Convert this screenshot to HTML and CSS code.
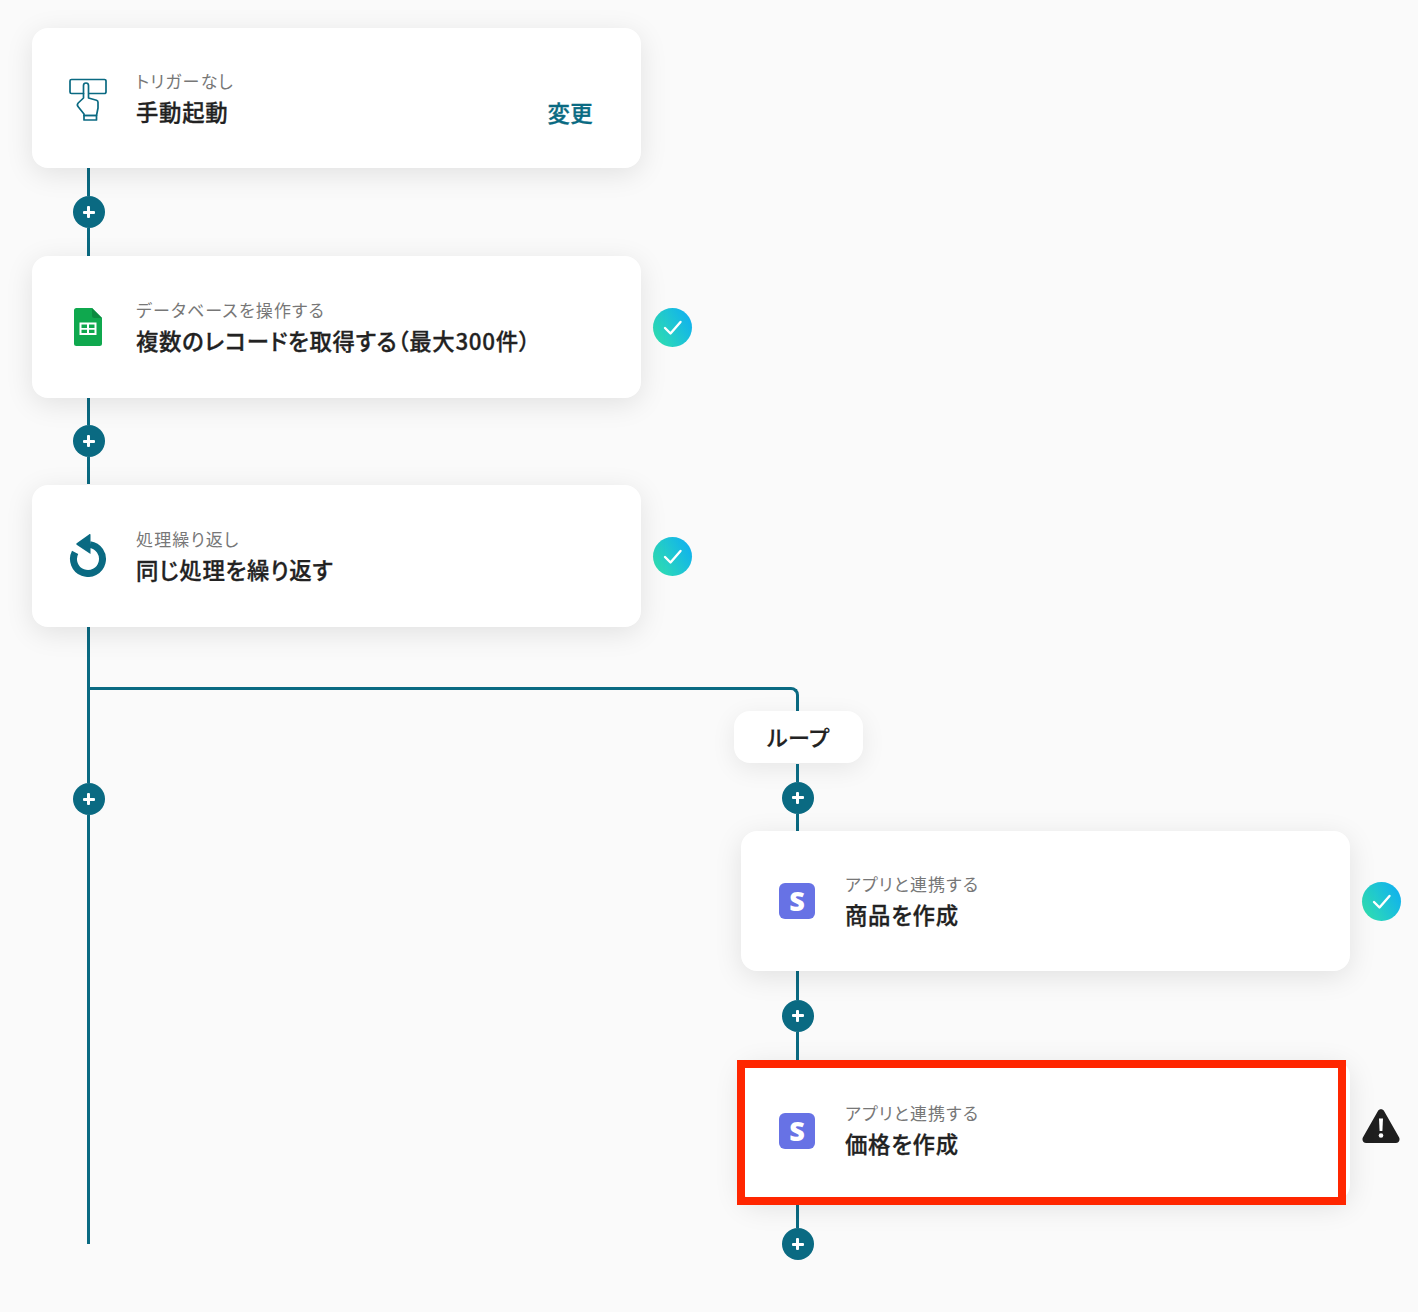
FILE: index.html
```html
<!DOCTYPE html>
<html lang="ja">
<head>
<meta charset="utf-8">
<title>フロー</title>
<link rel="stylesheet" href="styles.css">
</head>
<body>
<main class="flow">
  <div class="row">
    <section class="card card-short">
      <span class="icon">
        <svg class="svg-hand" viewBox="69 78 38 44" fill="none" stroke="#0a6a82" stroke-width="1.7" stroke-linejoin="round" stroke-linecap="round">
          <path d="M83.500 93.500H71.500a1.500 1.500 0 0 1-1.500-1.500V81a1.500 1.500 0 0 1 1.500-1.500h33a1.500 1.500 0 0 1 1.500 1.500v11a1.500 1.500 0 0 1-1.500 1.500H89"/>
          <path d="M84 115.500V114L78 106.500c-1-1.300-.8-2.400.2-3.500L83.500 98V85.500a2.500 2.500 0 0 1 5 0V98l8 2.200c1 .3 1.500 1 1.500 2V108l-1.500 7.500z"/>
          <path d="M84 115.500h12.500v4.500H84z"/>
        </svg>
      </span>
      <div class="text">
        <p class="label">トリガーなし</p>
        <p class="title">手動起動</p>
      </div>
      <a class="change">変更</a>
    </section>
  </div>
  <div class="conn conn-88"><i class="line"></i><span class="plus"></span><i class="line"></i></div>
  <div class="row">
    <section class="card">
      <span class="icon">
        <svg class="svg-sheet" viewBox="74 308 28 38">
          <path fill="#0fa84e" d="M76.500 308H92l10 10v25.500a2.500 2.500 0 0 1-2.500 2.500h-23a2.500 2.500 0 0 1-2.500-2.500v-33a2.500 2.500 0 0 1 2.500-2.500z"/>
          <path fill="#0b8a40" d="M92 308l10 10h-7.500a2.500 2.500 0 0 1-2.500-2.500z"/>
          <path fill="#fff" fill-rule="evenodd" d="M79.500 322.500h17V335h-17zm2 2V328H87v-3.500zm7.500 0V328h5.500v-3.500zm-7.500 5.200v3.300H87v-3.300zm7.500 0v3.300h5.500v-3.300z"/>
        </svg>
      </span>
      <div class="text">
        <p class="label">データベースを操作する</p>
        <p class="title">複数のレコードを取得する（最大300件）</p>
      </div>
    </section>
    <span class="check"><svg viewBox="0 0 39 39" fill="none" stroke="#fff" stroke-width="2.400" stroke-linecap="round" stroke-linejoin="round"><path d="M12 20l5.500 5.500L27.500 14"/></svg></span>
  </div>
  <div class="conn conn-87"><i class="line"></i><span class="plus"></span><i class="line"></i></div>
  <div class="row">
    <section class="card">
      <span class="icon">
        <svg class="svg-loop" viewBox="69 533 38 44" fill="none">
          <path stroke="#0a6a82" stroke-width="7" d="M90 544.600A14.500 14.500 0 1 1 75.100 552.300"/>
          <path fill="#0a6a82" d="M90.500 534v20L77 545c-1-.6-1-1.400 0-2L89 534.500c.7-.4 1.500-.2 1.500-.5z"/>
        </svg>
      </span>
      <div class="text">
        <p class="label">処理繰り返し</p>
        <p class="title">同じ処理を繰り返す</p>
      </div>
    </section>
    <span class="check"><svg viewBox="0 0 39 39" fill="none" stroke="#fff" stroke-width="2.400" stroke-linecap="round" stroke-linejoin="round"><path d="M12 20l5.500 5.500L27.500 14"/></svg></span>
  </div>
  <div class="branch">
    <div class="rail"><i class="line"></i><span class="plus"></span><i class="line"></i></div>
    <div class="loop">
      <div class="elbow"></div>
      <div class="loop-body">
        <div class="pill">ループ</div>
        <div class="conn conn-loop"><i class="line"></i><span class="plus"></span><i class="line"></i></div>
        <div class="row">
          <section class="card card-short">
            <span class="icon"><span class="stripe">S</span></span>
            <div class="text">
              <p class="label">アプリと連携する</p>
              <p class="title">商品を作成</p>
            </div>
          </section>
          <span class="check"><svg viewBox="0 0 39 39" fill="none" stroke="#fff" stroke-width="2.400" stroke-linecap="round" stroke-linejoin="round"><path d="M12 20l5.500 5.500L27.500 14"/></svg></span>
        </div>
        <div class="conn conn-89"><i class="line"></i><span class="plus"></span><i class="line"></i></div>
        <div class="row">
          <section class="card card-last">
            <span class="icon"><span class="stripe">S</span></span>
            <div class="text">
              <p class="label">アプリと連携する</p>
              <p class="title">価格を作成</p>
            </div>
            <div class="highlight"></div>
          </section>
          <svg class="warn" viewBox="0 0 38 34">
            <path fill="#1f1f1f" d="M15.800 2.200c1.500-2.600 4.900-2.600 6.400 0l14.800 26c1.500 2.600-.3 5.800-3.200 5.800H4.200c-2.900 0-4.700-3.200-3.200-5.800z"/>
            <path fill="#fff" d="M17 9.500h4l-.6 12.500h-2.800z"/>
            <circle fill="#fff" cx="19" cy="26.500" r="2.300"/>
          </svg>
        </div>
        <div class="conn conn-end"><i class="line"></i><span class="plus"></span></div>
      </div>
    </div>
  </div>
</main>
</body>
</html>
```
FILE: styles.css
```css
* { box-sizing: border-box; }
html, body { margin: 0; }
body {
  background: #fafafa;
  color: #222;
  font-family: "Noto Sans CJK JP", "Noto Sans", sans-serif;
  font-feature-settings: "palt";
  height: 1312px;
  overflow: hidden;
}
p { margin: 0; }
.flow { padding: 28px 0 0 32px; }
.row { display: flex; align-items: center; gap: 12px; }
.card {
  position: relative;
  display: flex;
  align-items: center;
  width: 609px;
  height: 142px;
  padding: 0 48px 0 37px;
  background: #fff;
  border-radius: 16px;
  box-shadow: 0 6px 28px rgba(0, 0, 0, .1);
}
.card-short { height: 140px; }
.card-last { height: 141px; }
.icon {
  flex: none;
  display: flex;
  justify-content: center;
  align-items: center;
  width: 38px;
  height: 44px;
  margin-right: 29px;
}
.svg-hand { width: 38px; height: 44px; display: block; margin-top: 4px; }
.svg-sheet { width: 28px; height: 38px; display: block; }
.svg-loop { width: 38px; height: 44px; display: block; margin-top: -2px; }
.stripe {
  width: 36px;
  height: 36px;
  border-radius: 6px;
  background: #6772e5;
  color: #fff;
  font: 800 27px/36px "Open Sans", sans-serif;
  text-align: center;
}
.text { flex: 1; min-width: 0; margin-top: -4px; }
.label { font-size: 17px; line-height: 30px; margin-bottom: -1px; color: #777; letter-spacing: 1.15px; }
.title { font-size: 22.4px; line-height: 32px; font-weight: 500; color: #222; letter-spacing: .7px; -webkit-text-stroke: .3px #222; }
.change { align-self: center; margin-top: 27px; font-size: 22.4px; font-weight: 500; color: #0a6a82; line-height: 32px; letter-spacing: .35px; -webkit-text-stroke: .3px #0a6a82; }
.check {
  flex: none;
  width: 39px;
  height: 39px;
  border-radius: 50%;
  background: linear-gradient(60deg, #30dfb0 8%, #0fb0f0 92%);
}
.check svg { display: block; width: 39px; height: 39px; }
.warn { flex: none; width: 38px; height: 34px; margin-bottom: 9px; }
.conn {
  display: flex;
  flex-direction: column;
  align-items: center;
  width: 113px;
}
.conn-88 { height: 88px; }
.conn-87 { height: 87px; padding-bottom: 1px; }
.conn-89 { height: 89px; }
.conn-loop { height: 68px; padding-top: 1px; }
.conn-end { height: 59px; padding-top: 4px; }
.line { flex: 1; width: 3px; background: #0a6a82; }
.plus {
  flex: none;
  position: relative;
  width: 32px;
  height: 32px;
  border-radius: 50%;
  background: #0a6a82;
}
.plus::before, .plus::after {
  content: "";
  position: absolute;
  left: 50%;
  top: 50%;
  background: #fff;
  border-radius: 1px;
}
.plus::before { width: 12px; height: 3px; margin: -1.5px 0 0 -6px; }
.plus::after { width: 3px; height: 12px; margin: -6px 0 0 -1.5px; }
.branch { display: flex; }
.rail {
  flex: none;
  display: flex;
  flex-direction: column;
  align-items: center;
  width: 113px;
  height: 617px;
}
.rail .line:first-child { flex: 0 0 156px; }
.loop { flex: none; margin-left: -55px; padding-top: 60px; }
.elbow {
  width: 709px;
  height: 24px;
  border-top: 3px solid #0a6a82;
  border-right: 3px solid #0a6a82;
  border-top-right-radius: 8px;
}
.loop-body { margin-left: 651px; }
.pill {
  width: 129px;
  height: 52px;
  margin-left: -7px;
  border-radius: 16px;
  background: #fff;
  box-shadow: 0 6px 24px rgba(0, 0, 0, .08);
  font-size: 22px;
  font-weight: 500;
  line-height: 50px;
  text-align: center;
  letter-spacing: .5px;
  -webkit-text-stroke: .2px #222;
}
.highlight {
  position: absolute;
  left: -4px;
  top: 0;
  width: 609px;
  height: 145px;
  border: 8px solid #ff2600;
}
```
